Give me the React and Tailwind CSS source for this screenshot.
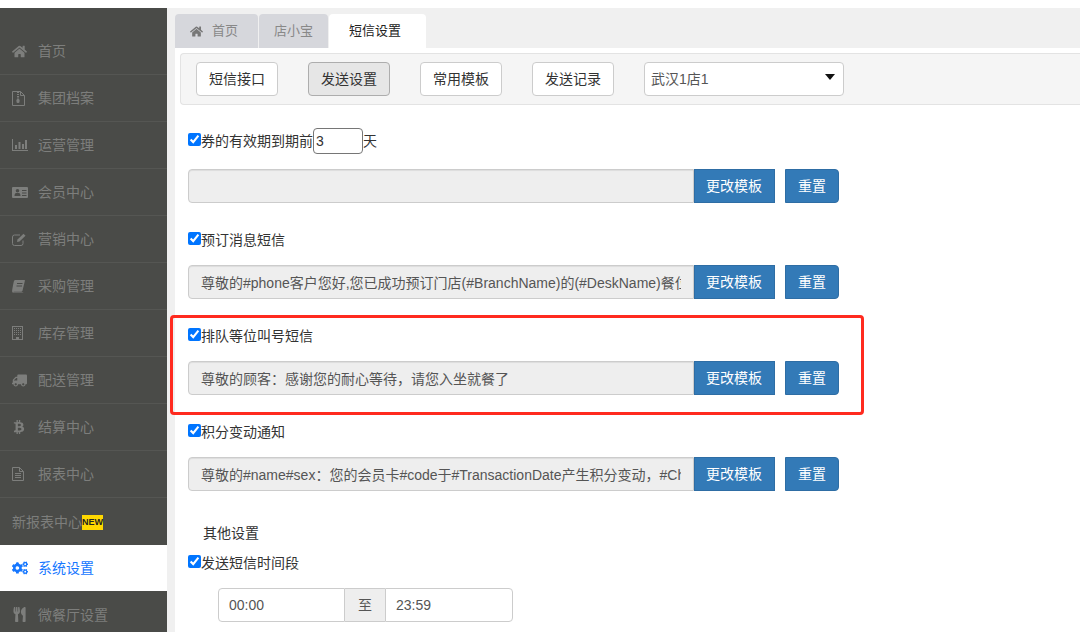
import React from 'react';
import { FaHome, FaTruck, FaBtc, FaCogs, FaUtensils } from 'react-icons/fa';

// font-awesome 4 style outlines, the package only has the newer shapes
const ZipIcon = () => (
  <svg width="13" height="15" viewBox="0 0 13 15" fill="none" stroke="currentColor">
    <path d="M.5.5h8l4 4v10H.5z" />
    <path d="M8.5.5v4h4" />
    <path d="M5 1.5h2M5 3.5h2M5 5.5h2" />
    <rect x="4.5" y="8" width="3" height="4" rx="1.2" fill="currentColor" stroke="none" />
    <path d="M6 6v3" />
  </svg>
);

const ChartIcon = () => (
  <svg width="16" height="12" viewBox="0 0 16 12" fill="currentColor">
    <path d="M0 0h1v11h15v1H0z" />
    <path d="M3 6h2v4H3zM6.500 3h2v7h-2zM10 5h2v5h-2zM13 1h2v9h-2z" />
  </svg>
);

const VcardIcon = () => (
  <svg width="16" height="11" viewBox="0 0 16 11" fill="currentColor">
    <path fillRule="evenodd" d="M1 0h14a1 1 0 0 1 1 1v9a1 1 0 0 1-1 1H1a1 1 0 0 1-1-1V1a1 1 0 0 1 1-1zm4.500 2A1.800 1.800 0 1 0 5.500 5.600 1.800 1.800 0 0 0 5.500 2zM2.500 9h6c0-2-.8-3-1.500-3h-3c-.7 0-1.500 1-1.500 3zM10 3v1h4.500V3zm0 2.500v1h4.500v-1zM10 8v1h4.500V8z" />
  </svg>
);

const EditIcon = () => (
  <svg width="14" height="13" viewBox="0 0 14 13" fill="none" stroke="currentColor">
    <path d="M11 7.500v3A2 2 0 0 1 9 12.500H2.500a2 2 0 0 1-2-2V4a2 2 0 0 1 2-2H8" />
    <path d="M5 9l.5-2.500L11.500.8l2 2L7.500 8.500z" fill="currentColor" stroke="none" />
  </svg>
);

const BookIcon = () => (
  <svg width="13" height="13" viewBox="0 0 13 13" fill="currentColor">
    <path d="M3.200 0H12.500c.4 0 .5.300.4.700L10.500 10.700c-.2.700-.7 1-1.300 1H2c-.5 0-.8.200-.7.500.1.200.3.300.7.300h8.500l.9-.3-.1.300c-.2.300-.5.500-.9.500H1.800c-.9 0-1.800-.9-1.700-2 .2-1.500 1.100-7 1.600-9C1.900.800 2.400 0 3.200 0zM5 3v1h5.500V3zm-.500 2.500v1H10v-1z" fillRule="evenodd" />
  </svg>
);

const BuildingIcon = () => (
  <svg width="11" height="14" viewBox="0 0 11 14" fill="currentColor">
    <path fillRule="evenodd" d="M0 0h11v14H0zm1 1v12h3v-2h3v2h3V1z" />
    <path d="M2 2h1v1H2zM4 2h1v1H4zM6 2h1v1H6zM8 2h1v1H8zM2 4h1v1H2zM4 4h1v1H4zM6 4h1v1H6zM8 4h1v1H8zM2 6h1v1H2zM4 6h1v1H4zM6 6h1v1H6zM8 6h1v1H8zM2 8h1v1H2zM4 8h1v1H4zM6 8h1v1H6zM8 8h1v1H8z" />
  </svg>
);

const FileIcon = () => (
  <svg width="12" height="14" viewBox="0 0 12 14" fill="none" stroke="currentColor">
    <path d="M.5.500h7l4 4v9H.5z" />
    <path d="M7.500.500v4h4M3 6.500h6M3 8.500h6M3 10.500h6" />
  </svg>
);

const menu = [
  { label: '首页', icon: <FaHome size={15} /> },
  { label: '集团档案', icon: <ZipIcon /> },
  { label: '运营管理', icon: <ChartIcon /> },
  { label: '会员中心', icon: <VcardIcon /> },
  { label: '营销中心', icon: <EditIcon /> },
  { label: '采购管理', icon: <BookIcon /> },
  { label: '库存管理', icon: <BuildingIcon /> },
  { label: '配送管理', icon: <FaTruck size={15} style={{ transform: 'scaleX(-1)' }} /> },
  { label: '结算中心', icon: <FaBtc size={14} /> },
  { label: '报表中心', icon: <FileIcon /> },
];

const toolbar = ['短信接口', '发送设置', '常用模板', '发送记录'];

const templates = [
  { label: '预订消息短信', value: '尊敬的#phone客户您好,您已成功预订门店(#BranchName)的(#DeskName)餐位，请准时到店' },
  { label: '排队等位叫号短信', value: '尊敬的顾客：感谢您的耐心等待，请您入坐就餐了' },
  { label: '积分变动通知', value: '尊敬的#name#sex：您的会员卡#code于#TransactionDate产生积分变动，#ChangePoints' },
];

const MenuRow = ({ label, icon }) => (
  <div className="flex h-[47px] items-center border-b border-[#555653] pl-3 text-[#7d7e7c]">
    <span className="flex w-[26px] shrink-0">{icon}</span>
    {label}
  </div>
);

const TemplateInput = ({ value }) => (
  <div className="flex h-[34px] w-[651px]">
    <input
      readOnly
      disabled
      value={value}
      className="h-[34px] w-[506px] rounded-l border border-[#ccc] bg-[#eee] px-3 text-[#555] shadow-[inset_0_1px_1px_rgba(0,0,0,0.075)]"
    />
    <button className="h-[34px] w-[81px] border border-[#2e6da4] bg-[#337ab7] pr-px text-white">更改模板</button>
    <button className="ml-[10px] h-[34px] w-[54px] rounded-r border border-[#2e6da4] bg-[#337ab7] text-white">重置</button>
  </div>
);

const CheckLabel = ({ children }) => (
  <div className="flex h-5 items-center text-[#333]">
    <input type="checkbox" checked readOnly className="mt-[2px] h-[13px] w-[13px] self-start" />
    {children}
  </div>
);

export default function App() {
  return (
    <div
      className="h-[632px] w-[1080px] overflow-hidden bg-white pt-2 text-sm"
      style={{ fontFamily: '"Liberation Sans", "Noto Sans CJK SC", sans-serif' }}
    >
      <div className="flex h-[624px] bg-[#f0f0f0]">
        <aside className="w-[167px] shrink-0 bg-[#4a4b48] pt-5">
          {menu.map((item) => <MenuRow key={item.label} {...item} />)}
          <div className="flex h-[47px] items-center pl-3 text-[#7d7e7c]">
            新报表中心
            <span className="flex h-[15px] w-[21px] translate-y-px items-center justify-center bg-[#ffd800] text-[9px] font-bold text-[#222]">NEW</span>
          </div>
          <div className="flex h-[46px] items-center bg-white pl-3 text-[#1677ff]">
            <span className="flex w-[26px] shrink-0"><FaCogs size={16} /></span>
            系统设置
          </div>
          <div className="flex h-[47px] items-center pl-3 text-[#7d7e7c]">
            <span className="flex w-[26px] shrink-0"><FaUtensils size={15} /></span>
            微餐厅设置
          </div>
        </aside>

        <main className="min-w-0 flex-1 pl-2">
          <div className="flex h-10 items-end gap-px pt-[6px] text-[13px]">
            <div className="flex h-[34px] w-[83px] items-center rounded-t bg-[#d6d7dc] pl-[15px] text-[#888]">
              <FaHome size={13} className="mr-[9px] text-[#777]" />
              首页
            </div>
            <div className="flex h-[34px] w-[69px] items-center justify-center rounded-t bg-[#d6d7dc] text-[#888]">店小宝</div>
            <div className="flex h-[34px] w-[97px] items-center rounded-t bg-white pl-5 text-[#222]">短信设置</div>
          </div>

          <div className="h-[584px] overflow-hidden bg-white pt-[5px]">
            <div className="ml-[5px] flex h-[52px] items-center gap-[30px] rounded-l border border-r-0 border-[#e3e3e3] bg-[#f5f5f5] pl-[15px]">
              {toolbar.map((name) => (
                <button
                  key={name}
                  className={`h-[34px] w-[82px] rounded border text-[#333] ${name === '发送设置' ? 'border-[#adadad] bg-[#e6e6e6]' : 'border-[#ccc] bg-white'}`}
                >
                  {name}
                </button>
              ))}
              <div className="flex h-[34px] w-[200px] items-start justify-between rounded border border-[#ccc] bg-white pl-[6px] pr-[8px] text-[#555]">
                <span className="leading-[32px]">武汉1店1</span>
                <svg width="10" height="6" viewBox="0 0 10 6" className="mt-[11px]"><path d="M0 0h10L5 6z" fill="#111" /></svg>
              </div>
            </div>

            <div className="pl-[13px] pt-[23px]">
              <div className="flex h-[26px] items-center text-[#333]">
                <input type="checkbox" checked readOnly className="mt-[5px] h-[13px] w-[13px] self-start" />
                券的有效期到期前
                <input readOnly value="3" className="h-[26px] w-[50px] rounded-sm border border-[#767676] px-[2px] text-[#333]" />
                天
              </div>
              <div className="mt-[15px]"><TemplateInput value="" /></div>

              {templates.map((t) => (
                <div key={t.label} className="pt-[27px]">
                  <CheckLabel>{t.label}</CheckLabel>
                  <div className="mt-[15px]"><TemplateInput value={t.value} /></div>
                </div>
              ))}

              <div className="ml-[15px] mt-8 h-5 leading-5 text-[#333]">其他设置</div>
              <div className="mt-[10px]"><CheckLabel>发送短信时间段</CheckLabel></div>
              <div className="ml-[30px] mt-[15px] flex h-[34px] w-[295px]">
                <input readOnly value="00:00" className="h-[34px] w-[127px] rounded-l border border-[#ccc] px-[10px] text-[#555]" />
                <div className="flex h-[34px] w-10 items-center justify-center border-y border-[#ccc] bg-[#eee] text-[#555]">至</div>
                <input readOnly value="23:59" className="h-[34px] w-[128px] rounded-r border border-[#ccc] px-[10px] text-[#555]" />
              </div>
            </div>
          </div>
        </main>
      </div>

      {/* red highlight drawn over the screenshot */}
      <div className="pointer-events-none absolute left-[170px] top-[315px] h-[100px] w-[694px] rounded border-[3px] border-[#ff2a1f]" />
    </div>
  );
}
